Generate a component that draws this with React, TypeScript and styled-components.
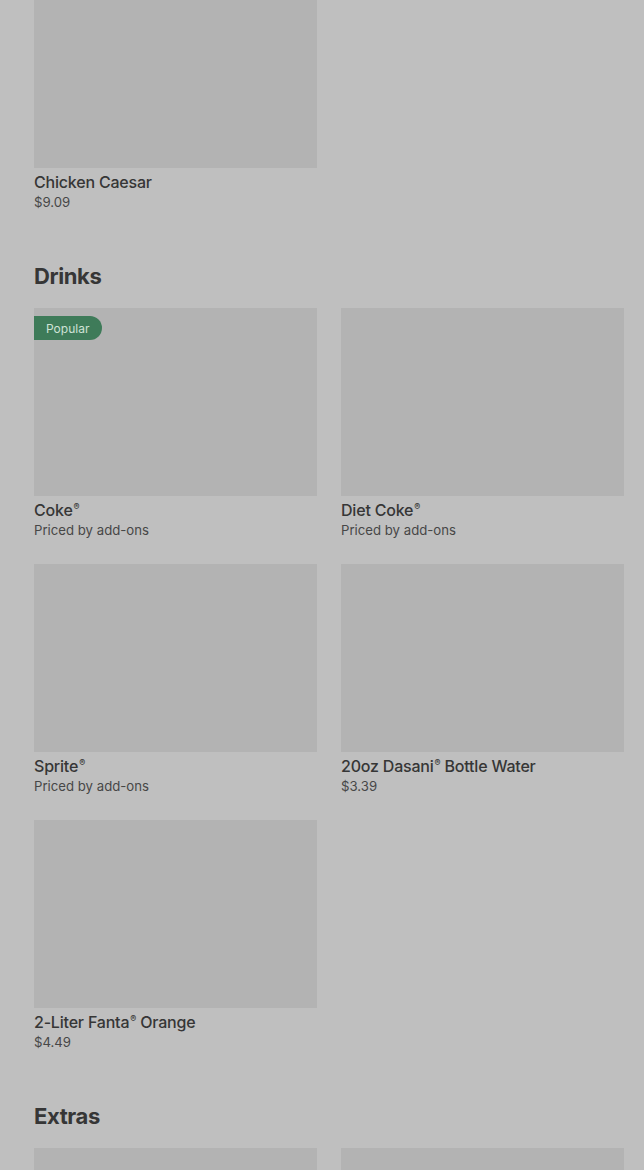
import React from "react";
import styled, { createGlobalStyle } from "styled-components";

const Global = createGlobalStyle`
  html, body { margin: 0; padding: 0; background: #bfbfbf; }
  body { font-family: Inter, "Noto Sans", "Liberation Sans", sans-serif; overflow: hidden; }
`;

const Page = styled.div`
  width: 644px;
  height: 1170px;
  overflow: hidden;
  background: #bfbfbf;
  box-sizing: border-box;
  padding: 0 20px 0 34px;
`;

const Scroll = styled.div`
  margin-top: -20px;
  display: flex;
  flex-direction: column;
  gap: 48px;
`;

const Section = styled.section`
  display: flex;
  flex-direction: column;
`;

const Heading = styled.h2`
  margin: 0 0 16px;
  font-size: 22px;
  line-height: 32px;
  font-weight: 700;
  color: #363636;
  letter-spacing: -0.4px;
`;

const Grid = styled.div`
  display: grid;
  grid-template-columns: 283px 283px;
  column-gap: 24px;
  row-gap: 24px;
`;

const Card = styled.div`
  display: flex;
  flex-direction: column;
`;

const Thumb = styled.div`
  position: relative;
  height: 188px;
  background: #b3b3b3;
  margin-bottom: 4px;
`;

const Badge = styled.span`
  position: absolute;
  left: 0;
  top: 8px;
  height: 24px;
  padding: 0 13px 0 12px;
  display: flex;
  align-items: center;
  background: #3e7b59;
  color: #cfe2d6;
  font-size: 12px;
  border-radius: 0 12px 12px 0;
`;

const Title = styled.div`
  font-size: 16px;
  line-height: 20px;
  font-weight: 500;
  color: #363636;
  letter-spacing: -0.2px;
`;

const Reg = styled.sup`
  font-size: 9px;
  line-height: 0;
  vertical-align: 6px;
  margin-left: 1px;
`;

const Price = styled.div`
  font-size: 13.2px;
  line-height: 20px;
  color: #474747;
`;

type Item = { name: string; price: string; popular?: boolean };

const renderName = (name: string) =>
  name.split("®").flatMap((part, i, arr) =>
    i < arr.length - 1 ? [part, <Reg key={i}>®</Reg>] : [part]
  );

const ItemCard = ({ item }: { item: Item }) => (
  <Card>
    <Thumb>{item.popular && <Badge>Popular</Badge>}</Thumb>
    <Title>{renderName(item.name)}</Title>
    <Price>{item.price}</Price>
  </Card>
);

const drinks: Item[] = [
  { name: "Coke®", price: "Priced by add-ons", popular: true },
  { name: "Diet Coke®", price: "Priced by add-ons" },
  { name: "Sprite®", price: "Priced by add-ons" },
  { name: "20oz Dasani® Bottle Water", price: "$3.39" },
  { name: "2-Liter Fanta® Orange", price: "$4.49" },
];

const ExtraThumb = styled.div`
  height: 188px;
  background: #b3b3b3;
`;

export default function App() {
  return (
    <Page>
      <Global />
      <Scroll>
        <Section>
          <Grid>
            <ItemCard item={{ name: "Chicken Caesar", price: "$9.09" }} />
          </Grid>
        </Section>
        <Section>
          <Heading>Drinks</Heading>
          <Grid>
            {drinks.map((d) => (
              <ItemCard key={d.name} item={d} />
            ))}
          </Grid>
        </Section>
        <Section>
          <Heading>Extras</Heading>
          <Grid>
            <ExtraThumb />
            <ExtraThumb />
          </Grid>
        </Section>
      </Scroll>
    </Page>
  );
}
